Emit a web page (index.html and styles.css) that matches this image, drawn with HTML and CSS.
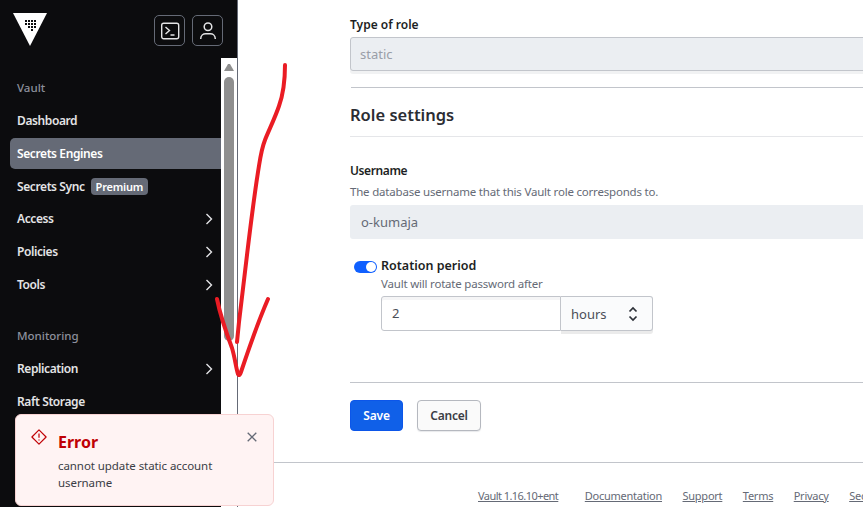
FILE: index.html
```html
<!DOCTYPE html>
<html lang="en">
<head>
<meta charset="utf-8">
<title>Vault</title>
<link rel="stylesheet" href="styles.css">
</head>
<body>
<div class="app">
  <aside class="sidebar">
    <header class="side-head">
      <svg class="logo" width="34" height="34" viewBox="0 0 34 34"><path d="M0 0H34L17 33Z" fill="#fff"/><g fill="#0c0c0e"><rect x="12" y="7" width="2" height="2"/><rect x="15" y="7" width="2" height="2"/><rect x="18" y="7" width="2" height="2"/><rect x="21" y="7" width="2" height="2"/><rect x="12" y="10" width="2" height="2"/><rect x="15" y="10" width="2" height="2"/><rect x="18" y="10" width="2" height="2"/><rect x="21" y="10" width="2" height="2"/><rect x="15" y="13" width="2" height="2"/><rect x="18" y="13" width="2" height="2"/><rect x="21" y="13" width="2" height="2"/><rect x="18" y="16" width="2" height="2"/></g></svg>
      <div class="head-btns">
        <button class="icon-btn"><svg width="20" height="20" viewBox="0 0 20 20" fill="none" stroke="#e4e4e6" stroke-width="1.4"><rect x="1.7" y="2.2" width="17" height="15.6" rx="2"/><path d="M5.5 6l4 3.5-4 3.5M10.5 14h4"/></svg></button>
        <button class="icon-btn"><svg width="20" height="20" viewBox="0 0 20 20" fill="none" stroke="#e4e4e6" stroke-width="1.5"><circle cx="10" cy="5.8" r="3.8"/><path d="M2.7 18c0-3.6 2.6-5.2 5-5.2h4.6c2.400 0 5 1.600 5 5.200"/></svg></button>
      </div>
    </header>
    <div class="side-body">
      <nav class="nav">
        <div class="nav-title">Vault</div>
        <a class="nav-item">Dashboard</a>
        <a class="nav-item active">Secrets Engines</a>
        <a class="nav-item sync">Secrets Sync <span class="badge">Premium</span></a>
        <a class="nav-item">Access <svg class="chev" width="8" height="12" viewBox="0 0 8 12"><path d="M1.500 1l5 5-5 5" fill="none" stroke="#e4e4e6" stroke-width="1.400"/></svg></a>
        <a class="nav-item">Policies <svg class="chev" width="8" height="12" viewBox="0 0 8 12"><path d="M1.500 1l5 5-5 5" fill="none" stroke="#e4e4e6" stroke-width="1.400"/></svg></a>
        <a class="nav-item">Tools <svg class="chev" width="8" height="12" viewBox="0 0 8 12"><path d="M1.500 1l5 5-5 5" fill="none" stroke="#e4e4e6" stroke-width="1.400"/></svg></a>
        <div class="nav-title second">Monitoring</div>
        <a class="nav-item">Replication <svg class="chev" width="8" height="12" viewBox="0 0 8 12"><path d="M1.500 1l5 5-5 5" fill="none" stroke="#e4e4e6" stroke-width="1.400"/></svg></a>
        <a class="nav-item">Raft Storage</a>
      </nav>
      <div class="scrollbar">
        <svg class="scroll-up" width="10" height="8" viewBox="0 0 10 8"><path d="M0 8L4 1h2l4 7Z" fill="#8f8f8f"/></svg>
        <div class="scroll-thumb"></div>
      </div>
    </div>
  </aside>
  <main class="main">
    <form class="form">
      <label class="label">Type of role</label>
      <div class="input disabled-select">static</div>
      <hr class="rule first-rule">
      <h2 class="section">Role settings</h2>
      <hr class="rule light">
      <label class="label user-label">Username</label>
      <p class="help">The database username that this Vault role corresponds to.</p>
      <div class="input readonly">o-kumaja</div>
      <div class="toggle-row">
        <span class="toggle"><span class="knob"></span></span>
        <div class="toggle-body">
          <div class="toggle-label">Rotation period</div>
          <p class="help tight">Vault will rotate password after</p>
          <div class="ttl">
            <div class="ttl-input">2</div>
            <div class="ttl-unit">hours
              <svg width="10" height="16" viewBox="0 0 10 16" fill="none" stroke="#2b2f36" stroke-width="1.700"><path d="M1.500 5.500L5 2l3.500 3.500M1.500 10.500L5 14l3.500-3.500"/></svg>
            </div>
          </div>
        </div>
      </div>
      <hr class="rule actions-rule">
      <div class="actions">
        <button type="button" class="btn primary">Save</button>
        <button type="button" class="btn secondary">Cancel</button>
      </div>
    </form>
    <footer class="footer">
      <a class="version">Vault 1.16.10+ent</a><a>Documentation</a><a>Support</a><a>Terms</a><a>Privacy</a><a>Security</a>
    </footer>
  </main>
</div>
<div class="toast">
  <svg class="toast-icon" width="16" height="16" viewBox="0 0 16 16" fill="none" stroke="#c00005" stroke-width="1.200"><path d="M8 .9L15.100 8 8 15.100 .9 8Z" stroke-linejoin="round"/><path d="M8 4.500v4.200M8 10.600v1"/></svg>
  <div class="toast-body">
    <div class="toast-title">Error</div>
    <div class="toast-msg">cannot update static account username</div>
  </div>
  <svg class="toast-close" width="10" height="10" viewBox="0 0 10 10" stroke="#656a76" stroke-width="1.300"><path d="M.7.700l8.600 8.600M9.300.700L.7 9.300"/></svg>
</div>
<svg class="scribble" width="863" height="507" viewBox="0 0 863 507" fill="none" stroke="#ea1c24" stroke-width="4" stroke-linecap="round" stroke-linejoin="round">
  <path d="M285 65C285 80 284 92 279 106C275 118 268 132 265 140C261 150 260 160 258 172C254 198 250 230 247 255C244 280 241 305 239 322L237 342"/>
  <path d="M217 299C220 314 226 332 232 348C235 358 236 368 238 374C239 376 240 375 241 372C247 354 258 322 268 299"/>
</svg>
</body>
</html>
```
FILE: styles.css
```css
* { box-sizing: border-box; }
html, body { margin: 0; height: 100%; overflow: hidden; }
body { font-family: "Noto Sans", "Open Sans", sans-serif; background: #fff; color: #3b3d45; font-size: 13px; position: relative; }
.app { display: flex; height: 507px; width: 863px; overflow: hidden; }

.sidebar { width: 238px; flex: none; background: #0c0c0e; border-right: 1px solid #656a76; display: flex; flex-direction: column; height: 507px; overflow: hidden; }
.side-head { height: 58px; flex: none; display: flex; justify-content: space-between; align-items: flex-start; padding: 13px 14px 0 13px; }
.logo { display: block; }
.head-btns { display: flex; gap: 7px; padding-top: 2px; }
.icon-btn { width: 31px; height: 31px; background: transparent; border: 1px solid #656a76; border-radius: 5px; padding: 0; display: flex; align-items: center; justify-content: center; }
.side-body { flex: 1; display: flex; min-height: 0; }
.nav { width: 221px; flex: none; padding: 21px 0 0 10px; font-weight: 600; font-size: 12px; letter-spacing: -.4px; color: #e4e4e6; }
.nav-title { color: #8c909c; font-weight: 500; font-size: 11.500px; letter-spacing: 0; height: 18px; line-height: 18px; padding-left: 7px; margin-bottom: 8px; }
.nav-title.second { margin-top: 27px; margin-bottom: 8px; }
.nav-item { display: flex; align-items: center; height: 31px; margin-bottom: 2px; padding-left: 7px; padding-right: 8px; border-radius: 5px 0 0 5px; white-space: nowrap; }
.nav-item.sync { margin-bottom: 1px; }
.nav-item.active { background: #656a76; color: #fff; }
.chev { margin-left: auto; }
.badge { background: #656a76; color: #fff; border-radius: 4px; font-size: 11px; letter-spacing: -.2px; line-height: 17px; height: 17px; padding: 0 5px; margin-left: 6px; }
.scrollbar { width: 16px; flex: none; background: #fff; display: flex; flex-direction: column; align-items: center; padding: 5px 2px 0 1px; }
.scroll-up { display: block; flex: none; }
.scroll-thumb { width: 10px; height: 264px; margin-top: 6px; border-radius: 5px; background: #8f8f8f; flex: none; }

.main { flex: 1; min-width: 0; display: flex; flex-direction: column; overflow: hidden; }
.form { width: 640px; margin-left: 112px; padding-top: 16px; flex: none; }
.label { display: block; font-weight: 600; font-size: 12px; line-height: 18px; color: #1d1f24; }
.input { height: 34px; width: 100%; line-height: 34px; padding-left: 10px; font-size: 13px; border-radius: 3px; }
.disabled-select { margin-top: 3px; background: #ebeef2; border: 1px solid #c2c5cb; color: #9a9ea8; line-height: 32px; padding-left: 9px; box-shadow: 0 3px 0 #f1f2f3; }
.rule { border: 0; border-top: 1px solid #c2c5cb; margin: 0; }
.first-rule { margin-top: 16px; margin-left: 1px; }
.section { margin: 16px 0 0; font-size: 16.500px; line-height: 22px; font-weight: 600; color: #2b2d33; }
.rule.light { border-top-color: #e5e6e9; margin-top: 10px; }
.user-label { margin-top: 25px; letter-spacing: -.4px; }
.help { margin: 3px 0 0; font-size: 11.500px; letter-spacing: -.2px; line-height: 17px; color: #656a76; }
.readonly { margin-top: 5px; background: #ebeef2; color: #656a76; padding-left: 11px; }
.toggle-row { display: flex; margin-top: 18px; }
.toggle { width: 23px; height: 12px; margin-top: 4px; background: #1060ff; border-radius: 6px; position: relative; flex: none; margin-left: 4px; }
.knob { position: absolute; right: 1px; top: 1px; width: 10px; height: 10px; border-radius: 50%; background: #fff; }
.toggle-body { margin-left: 4px; }
.toggle-label { font-weight: 600; font-size: 12.500px; line-height: 18px; color: #1d1f24; }
.help.tight { margin-top: 0; }
.ttl { display: flex; margin-top: 4px; }
.ttl-input { width: 180px; height: 35px; border: 1px solid #c2c5cb; border-radius: 3px 0 0 3px; line-height: 33px; padding-left: 10px; font-size: 13px; color: #4b4e57; box-shadow: inset 0 3px 0 #f5f5f6; }
.ttl-unit { width: 92px; height: 35px; border: 1px solid #c2c5cb; border-left: 0; border-radius: 0 3px 3px 0; background: #fafbfc; display: flex; align-items: center; justify-content: space-between; padding: 0 14px 0 10px; font-size: 13px; color: #4b4e57; box-shadow: 0 3px 0 #ebebeb; }
.actions-rule { margin-top: 51px; }
.actions { display: flex; gap: 14px; margin-top: 17px; }
.btn { height: 31px; border-radius: 4px; font-family: inherit; font-size: 12px; letter-spacing: -.2px; font-weight: 600; padding: 0; }
.primary { width: 53px; background: #1060e8; border: 1px solid #0c56e9; color: #fff; }
.secondary { width: 64px; background: #fafafa; border: 1px solid #b5b8bf; color: #3b3d45; box-shadow: 0 1px 1px rgba(101,106,118,.15); }

.footer { margin-top: 31px; border-top: 1px solid #c2c5cb; height: 60px; display: flex; gap: 20.500px; padding: 25px 0 0 240px; white-space: nowrap; font-size: 11px; letter-spacing: -.25px; line-height: 16px; color: #656a76; flex: none; width: 640px; box-sizing: content-box; }
.footer a { text-decoration: underline; }
.footer .version { letter-spacing: -.55px; margin-right: 6px; }

.toast { position: absolute; left: 15px; top: 414px; width: 259px; height: 92px; background: #fff3f3; border: 1px solid #f7d2d2; border-radius: 6px; display: flex; padding: 14px 0 0 15px; }
.toast-icon { flex: none; margin-right: 11px; }
.toast-title { font-size: 16px; font-weight: 700; line-height: 24px; color: #c00005; margin-top: 1px; }
.toast-msg { width: 170px; font-size: 11.500px; letter-spacing: -.07px; line-height: 17px; color: #3b3d45; margin-top: 3px; }
.toast-close { position: absolute; right: 16px; top: 17px; }
.scribble { position: absolute; left: 0; top: 0; pointer-events: none; }
```
